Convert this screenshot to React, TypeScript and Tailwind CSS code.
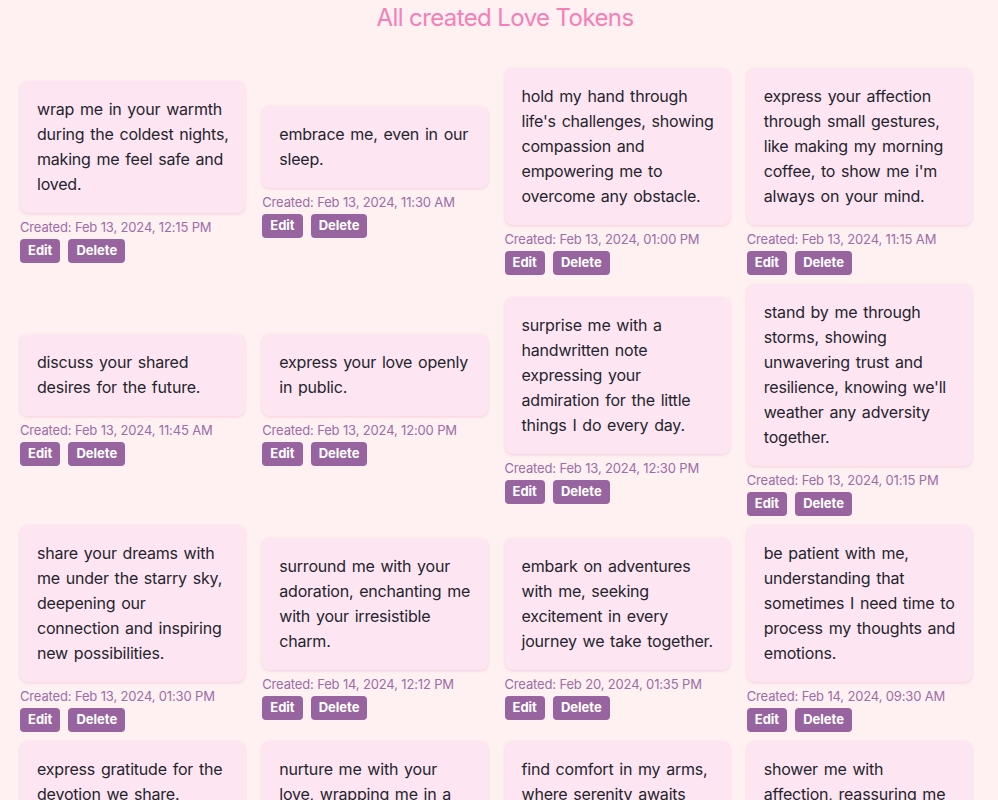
import React from 'react'

type Token = {
    id: number
    text: string
    created: string
}

const tokens: Token[] = [
    { id: 1, text: 'wrap me in your warmth during the coldest nights, making me feel safe and loved.', created: 'Feb 13, 2024, 12:15 PM' },
    { id: 2, text: 'embrace me, even in our sleep.', created: 'Feb 13, 2024, 11:30 AM' },
    { id: 3, text: "hold my hand through life's challenges, showing compassion and empowering me to overcome any obstacle.", created: 'Feb 13, 2024, 01:00 PM' },
    { id: 4, text: "express your affection through small gestures, like making my morning coffee, to show me i'm always on your mind.", created: 'Feb 13, 2024, 11:15 AM' },
    { id: 5, text: 'discuss your shared desires for the future.', created: 'Feb 13, 2024, 11:45 AM' },
    { id: 6, text: 'express your love openly in public.', created: 'Feb 13, 2024, 12:00 PM' },
    { id: 7, text: 'surprise me with a handwritten note expressing your admiration for the little things I do every day.', created: 'Feb 13, 2024, 12:30 PM' },
    { id: 8, text: "stand by me through storms, showing unwavering trust and resilience, knowing we'll weather any adversity together.", created: 'Feb 13, 2024, 01:15 PM' },
    { id: 9, text: 'share your dreams with me under the starry sky, deepening our connection and inspiring new possibilities.', created: 'Feb 13, 2024, 01:30 PM' },
    { id: 10, text: 'surround me with your adoration, enchanting me with your irresistible charm.', created: 'Feb 14, 2024, 12:12 PM' },
    { id: 11, text: 'embark on adventures with me, seeking excitement in every journey we take together.', created: 'Feb 20, 2024, 01:35 PM' },
    { id: 12, text: 'be patient with me, understanding that sometimes I need time to process my thoughts and emotions.', created: 'Feb 14, 2024, 09:30 AM' },
    { id: 13, text: 'express gratitude for the devotion we share. appreciating every little moment we spend together.', created: 'Feb 14, 2024, 10:05 AM' },
    { id: 14, text: 'nurture me with your love, wrapping me in a warm embrace that makes me feel cherished and adored.', created: 'Feb 14, 2024, 08:45 PM' },
    { id: 15, text: 'find comfort in my arms, where serenity awaits and every worry fades away into the quiet calm of the night.', created: 'Feb 15, 2024, 09:10 AM' },
    { id: 16, text: 'shower me with affection, reassuring me of your love every single day, no matter how far apart we are.', created: 'Feb 16, 2024, 07:20 PM' },
]

function TokenItem({ token }: { token: Token }) {
    return (
        <div className="flex flex-col">
            <div className="rounded-lg bg-[#fde6f1] p-4 pl-[17px] shadow-[0_1px_3px_rgba(214,150,180,0.35)]">
                <p className="text-[16px] leading-[25px] tracking-[-0.2px] [word-spacing:1.5px] text-[#24242e]">{token.text}</p>
            </div>
            <p className="mt-1.5 text-[13px] leading-4 tracking-[-0.15px] text-[#9b6ea6]">Created: {token.created}</p>
            <div className="mt-1 flex gap-2">
                <button className="h-6 rounded bg-[#97649f] px-2 text-[13px] font-bold text-white">Edit</button>
                <button className="h-6 rounded bg-[#97649f] px-2 text-[13px] font-bold text-white">Delete</button>
            </div>
        </div>
    )
}

export default function App() {
    return (
        <div className="min-h-screen bg-[#fff0f2] font-['Inter',sans-serif]">
            <h1 className="pl-3 pt-0.5 text-center text-2xl leading-8 tracking-[-0.6px] text-[#f57fb6]">All created Love Tokens</h1>
            <div className="grid w-[972px] grid-cols-4 items-center gap-x-[17px] gap-y-[9px] pl-5 pt-[34px]">
                {tokens.map((token) => (
                    <TokenItem key={token.id} token={token} />
                ))}
            </div>
        </div>
    )
}
